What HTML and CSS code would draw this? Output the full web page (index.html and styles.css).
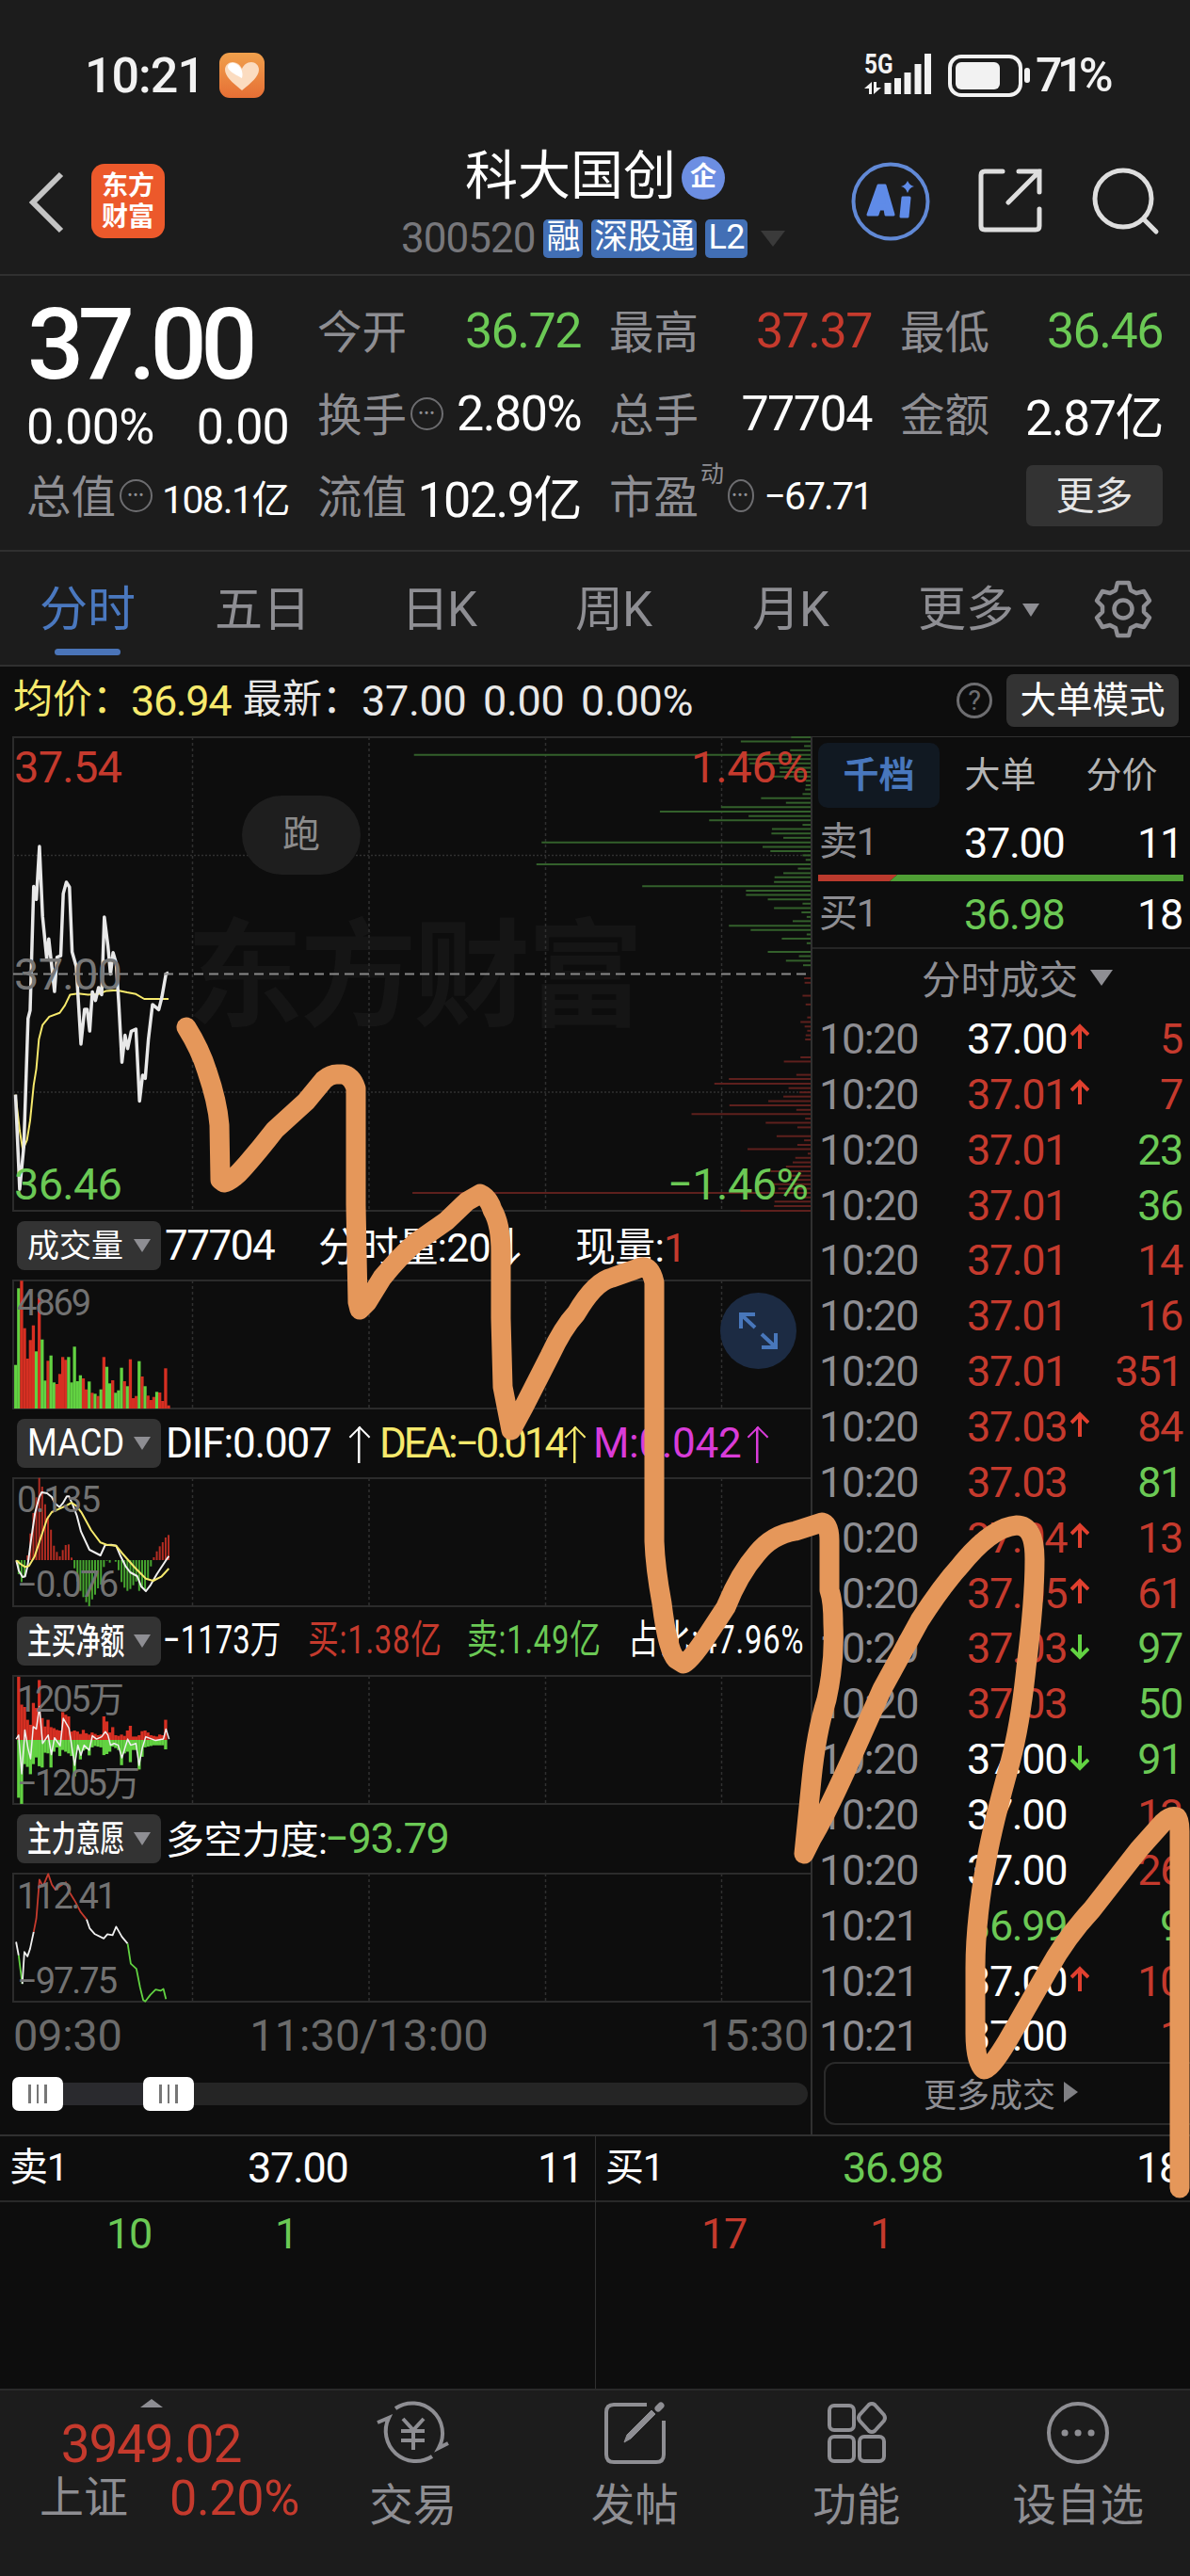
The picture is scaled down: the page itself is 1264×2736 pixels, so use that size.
FILE: index.html
```html
<!DOCTYPE html>
<html lang="zh-CN">
<head>
    <meta charset="utf-8">
    <title>科大国创 300520</title>
    <link rel="stylesheet" href="styles.css">
</head>
<body>
<div class="app">
    <div class="status">
        <span class="clock">10:21</span>
        <svg class="heart" width="48" height="48" viewBox="0 0 48 48">
            <defs><linearGradient id="hg" x1="0" y1="0" x2="0" y2="1"><stop offset="0" stop-color="#f0a04c"/><stop offset="1" stop-color="#e66f35"/></linearGradient></defs>
            <rect width="48" height="48" rx="11" fill="url(#hg)"/>
            <path d="M24 40C14 32 6 25 6 18c0-5 4-8 8-8 5 0 8 3 10 7 2-4 5-7 10-7 4 0 8 3 8 8 0 7-8 14-18 22z" fill="#fbdcc0"/>
            <path d="M24 27C14 22 8 18 9 14c1-3 4-4 7-3 6 2 10 9 8 16z" fill="#fff"/>
        </svg>
        <span class="space"></span>
        <svg class="signal" width="72" height="64" viewBox="0 -9 72 64">
            <text class="net" transform="translate(0 22) scale(.84 1)">5G</text>
            <path d="M25 44V32M35.500 44V27M46 44V21M57 44V12M67.500 44V1" stroke="#f2f2f2" stroke-width="7"/>
            <path d="M0 38l8-7v13h-3v-6zM10 31h3v6h5l-8 7z" fill="#f2f2f2"/>
        </svg>
        <svg class="battery" width="88" height="46" viewBox="0 0 88 46">
            <rect x="2" y="3" width="75" height="41" rx="12" fill="none" stroke="#f2f2f2" stroke-width="4"/>
            <rect x="8" y="9" width="47" height="29" rx="6" fill="#f2f2f2"/>
            <path d="M84 18v10" stroke="#f2f2f2" stroke-width="6" stroke-linecap="round"/>
        </svg>
        <span class="clock pct">71%</span>
    </div>

    <div class="head">
        <svg class="back" width="42" height="70" viewBox="0 0 42 70"><path d="M36 5L6 35l30 30" fill="none" stroke="#c4c4c4" stroke-width="6"/></svg>
        <div class="logo"><span>东方</span><span>财富</span></div>
        <div class="name">
            <div class="title">科大国创<span class="qi">企</span></div>
            <div class="code">300520<span class="tag">融</span><span class="tag">深股通</span><span class="tag">L2</span><i class="tri dark"></i></div>
        </div>
        <svg class="hicon" width="84" height="84" viewBox="0 0 84 84">
            <circle cx="42" cy="42" r="39.500" fill="none" stroke="#6189d6" stroke-width="4"/>
            <path d="M18 56L29 25h7l9 31h-8l-1-6h-6l-2 6zM31 43h4l-1-8z" fill="#5f8be8" stroke="#5f8be8" stroke-width="3" stroke-linejoin="round"/>
            <path d="M55 38h7l-2 20h-7z" fill="#5f8be8" stroke="#5f8be8" stroke-width="3" stroke-linejoin="round"/>
            <path d="M60 20q2 5 7 6-5 1-7 7-2-6-7-7 5-1 7-6z" fill="#5f8be8"/>
        </svg>
        <svg class="hicon share" width="68" height="68" viewBox="0 0 68 68" fill="none" stroke="#dedede" stroke-width="5" stroke-linecap="round">
            <path d="M26 3H7q-4 0-4 4v54q0 4 4 4h54q4 0 4-4V43M43 3h22v22M65 3L32 36"/>
        </svg>
        <svg class="hicon find" width="72" height="72" viewBox="0 0 72 72" fill="none" stroke="#dedede" stroke-width="5" stroke-linecap="round">
            <circle cx="33" cy="33" r="30"/><path d="M55 55l13 13"/>
        </svg>
    </div>

    <div class="quote">
        <div class="price">
            <b>37.00</b>
            <div class="pair"><span>0.00%</span><span>0.00</span></div>
        </div>
        <div class="cell"><label>今开</label><span class="green">36.72</span></div>
        <div class="cell"><label>最高</label><span class="red">37.37</span></div>
        <div class="cell"><label>最低</label><span class="green">36.46</span></div>
        <div class="cell"><label>换手</label><i class="dots">•••</i><span>2.80%</span></div>
        <div class="cell"><label>总手</label><span>77704</span></div>
        <div class="cell"><label>金额</label><span>2.87亿</span></div>
        <div class="cell small"><label>总值</label><i class="dots">•••</i><span>108.1亿</span></div>
        <div class="cell"><label>流值</label><span>102.9亿</span></div>
        <div class="cell small pe"><label>市盈</label><sup>动</sup><i class="dots">•••</i><span>−67.71</span></div>
        <div class="cell"><button class="more">更多</button></div>
    </div>

    <div class="tabs">
        <span class="on">分时</span><span>五日</span><span>日K</span><span>周K</span><span>月K</span><span>更多<i class="tri"></i></span>
        <svg class="gear" width="62" height="62" viewBox="0 0 62 62" fill="none" stroke="#8e8e93" stroke-width="4.500" stroke-linejoin="round">
            <path d="M25 3h12l2 8 6 3 8-2 6 10-6 6v6l6 6-6 10-8-2-6 3-2 8H25l-2-8-6-3-8 2-6-10 6-6v-6l-6-6 6-10 8 2 6-3z"/>
            <circle cx="31" cy="31" r="9.500"/>
        </svg>
    </div>

    <div class="avg">
        <span class="yellow a1">均价：</span><span class="yellow a2">36.94</span><span class="a3">最新：</span><span class="a4">37.00</span><span class="a5">0.00</span><span class="a6">0.00%</span>
        <i class="help">?</i><button class="big">大单模式</button>
    </div>

    <div class="main">
        <div class="left">
            <svg class="chart" id="price" width="864" height="505" viewBox="0 782 864 505">
                <text class="water" x="198" y="1080" textLength="486">东方财富</text>
                <g class="plot"></g>
                <path d="M14 1034.500H861" stroke="#8a8a8a" stroke-width="2" stroke-dasharray="10 6"/>
                <rect x="257" y="845" width="126" height="84" rx="42" fill="#1e1e1e"/>
                <text class="run" x="320" y="900" text-anchor="middle">跑</text>
                <text class="r" x="15" y="831" textLength="115">37.54</text>
                <text class="g" x="15" y="1274" textLength="115">36.46</text>
                <text class="n" x="15" y="1051" textLength="115">37.00</text>
                <text class="r" x="734" y="831" textLength="125">1.46%</text>
                <text class="g" x="709" y="1274" textLength="150">−1.46%</text>
            </svg>

            <div class="bar">
                <button><span>成交量</span><i class="tri"></i></button>
                <span class="v1">77704</span><span class="v2">分时量:20↓</span><span class="v3">现量:<em class="red">1</em></span>
            </div>
            <svg class="chart" id="volume" width="864" height="138" viewBox="0 1359 864 138">
                <g class="plot"></g>
                <text class="s" x="18" y="1397" textLength="79">4869</text>
                <circle cx="805.500" cy="1413.500" r="40.500" fill="#1c2b43"/>
                <path d="M787 1411v-15h15M788 1397l14 13M824 1416v15h-15M823 1430l-14-13" fill="none" stroke="#4877bb" stroke-width="4"/>
            </svg>

            <div class="bar">
                <button><span class="latin">MACD</span><i class="tri"></i></button>
                <span class="m1">DIF:0.007</span><i class="up"></i><span class="m2 yellow">DEA:−0.014</span><i class="up yellow"></i><span class="m3 purple">M:0.042</span><i class="up purple"></i>
            </div>
            <svg class="chart" id="macd" width="864" height="138" viewBox="0 1569 864 138">
                <g class="plot"></g>
                <text class="s" x="18" y="1606" textLength="89">0.135</text>
                <text class="s" x="18" y="1696" textLength="108">−0.076</text>
            </svg>

            <div class="bar">
                <button class="tight"><span class="thin">主买净额</span><i class="tri"></i></button>
                <svg class="net-row" width="688" height="64" viewBox="172 -5 688 64">
                    <text transform="translate(173 40) scale(.78 1)" textLength="161">−1173万</text>
                    <text class="r" transform="translate(327 40) scale(.78 1)" textLength="182">买:1.38亿</text>
                    <text class="g" transform="translate(496 40) scale(.78 1)" textLength="182">卖:1.49亿</text>
                    <text transform="translate(667 40) scale(.78 1)" textLength="239">占比:47.96%</text>
                </svg>
            </div>
            <svg class="chart" id="netbuy" width="864" height="138" viewBox="0 1779 864 138">
                <g class="plot"></g>
                <text class="s" x="18" y="1818" textLength="114">1205万</text>
                <text class="s" x="18" y="1907" textLength="131">−1205万</text>
            </svg>

            <div class="bar">
                <button><span class="thin">主力意愿</span><i class="tri"></i></button>
                <span class="w1">多空力度:</span><span class="green w2">−93.79</span>
            </div>
            <svg class="chart" id="will" width="864" height="138" viewBox="0 1989 864 138">
                <g class="plot"></g>
                <text class="s" x="18" y="2027" textLength="106">112.41</text>
                <text class="s" x="18" y="2117" textLength="107">−97.75</text>
            </svg>

            <div class="axis"><span>09:30</span><span class="mid">11:30/13:00</span><span>15:30</span></div>
            <div class="slider"><i></i><b></b><i></i></div>
        </div>

        <div class="right">
            <div class="rtabs"><span class="on">千档</span><span>大单</span><span>分价</span></div>
            <div class="lv"><span>卖1</span><span>37.00</span><span>11</span></div>
            <svg class="ratio" width="388" height="7" viewBox="0 0 388 7"><path d="M0 0h84l-8 7H0z" fill="#bb3a2d"/><path d="M84 0h304v7H76z" fill="#4f9f35"/></svg>
            <div class="lv buy"><span>买1</span><span class="green">36.98</span><span>18</span></div>
            <div class="deals">分时成交<i class="tri"></i></div>
            <div id="ticks"></div>
            <div class="all">更多成交<i></i></div>
        </div>
    </div>

    <div class="queue">
        <div class="side">
            <div class="qh"><span>卖1</span><span>37.00</span><span>11</span></div>
            <div class="qb green"><span>10</span><span>1</span></div>
        </div>
        <div class="side">
            <div class="qh"><span>买1</span><span class="green">36.98</span><span>18</span></div>
            <div class="qb red"><span>17</span><span>1</span></div>
        </div>
    </div>

    <div class="nav">
        <div class="index"><i></i><b>3949.02</b><div><span>上证</span><em>0.20%</em></div></div>
        <div class="item">
            <svg width="78" height="70" viewBox="0 0 78 70" fill="none" stroke="#8e8e93" stroke-width="4">
                <path d="M20 9A32 32 0 0 1 66 51L76 46M59 60A32 32 0 0 1 13 19L1 24"/>
                <path d="M28 20l11 12 11-12M39 31v22M26 33h25M26 43h25"/>
            </svg>交易
        </div>
        <div class="item">
            <svg width="70" height="70" viewBox="0 0 70 70" fill="none" stroke="#8e8e93" stroke-width="4">
                <path d="M48 5H13Q5 5 5 13v45q0 8 8 8h45q8 0 8-8V22"/>
                <path d="M24 45l3-8 26-26 4 4-26 26z" fill="#8e8e93" stroke-width="1"/>
                <path d="M60 9l3-3" stroke-width="7" stroke-linecap="round"/>
            </svg>发帖
        </div>
        <div class="item">
            <svg width="70" height="70" viewBox="0 0 70 70" fill="none" stroke="#8e8e93" stroke-width="4">
                <rect x="6" y="6" width="26" height="26" rx="5"/><rect x="6" y="39" width="26" height="26" rx="5"/><rect x="38" y="39" width="26" height="26" rx="5"/><path d="M48 5q3-2 6 0l10 11q2 3 0 6L54 33q-3 2-6 0L38 22q-2-3 0-6z"/>
            </svg>功能
        </div>
        <div class="item">
            <svg width="70" height="70" viewBox="0 0 70 70" fill="none" stroke="#8e8e93" stroke-width="4">
                <circle cx="35" cy="35" r="31"/><path d="M21 35h.1M35 35h.1M49 35h.1" stroke-width="7" stroke-linecap="round"/>
            </svg>设自选
        </div>
    </div>

    <!-- hand-drawn forecast over the whole page -->
    <svg class="draw" width="1264" height="2736" viewBox="0 0 1264 2736">
        <path d="M198 1091Q213 1115 220 1138Q231 1170 233 1195L234 1253L238 1256Q246 1255 259 1240Q275 1222 292 1200L325 1170L344 1147Q351 1141 358 1141H364Q374 1143 378 1156V1280L380 1383L382 1391L390 1383L406 1357Q424 1335 441 1320L474 1297L496 1276L510 1268Q519 1272 523 1285Q532 1300 532 1330V1400L534 1473L543 1519L557 1493L584 1440Q598 1410 612 1395Q632 1361 650 1357L681 1346Q691 1344 695 1362V1637Q696 1665 703 1703Q709 1753 718 1762L726 1767Q733 1765 752 1736L771 1707Q785 1672 804 1650Q820 1630 845 1626L873 1617Q881 1619 881 1636V1689Q885 1700 885 1725Q887 1764 878 1805Q867 1840 862 1890L854 1969L862 1953Q875 1932 900 1877L937 1794L977 1721Q1000 1685 1020 1663Q1053 1622 1080 1620Q1099 1620 1099 1656Q1099 1700 1090 1771Q1084 1830 1073 1872Q1054 1940 1048 1975Q1036 2040 1036 2090V2160Q1036 2190 1045 2198Q1052 2198 1070 2168L1113 2093Q1132 2058 1160 2028L1210 1964L1235 1936Q1243 1928 1250 1930Q1253 1933 1253 1945V2324"/>
    </svg>
</div>
<script src="chart.js"></script>
</body>
</html>
```
FILE: styles.css
```css
* { box-sizing: border-box; }
body {
    margin: 0;
    background: #0d0d0d;
    color: #fff;
    font-family: Roboto, "Noto Sans CJK SC", sans-serif;
    letter-spacing: -0.02em;
}
i, em { font-style: normal; }
button {
    font: inherit;
    letter-spacing: 0;
    border: 0;
    padding: 0;
    color: #fff;
    background: #333;
}
svg { display: block; flex: none; }
.app { position: relative; width: 1264px; height: 2736px; overflow: hidden; }
.green { color: #6bc955; }
.red { color: #c53a2d; }
.yellow { color: #f6e96c; }
.purple { color: #d93cd9; }
.tri {
    display: inline-block;
    border: 9px solid transparent;
    border-top: 14px solid #8e8e93;
    border-bottom: 0;
}

/* top */
.status {
    height: 154px;
    background: #1c1c1c;
    display: flex;
    align-items: center;
    padding: 6px 78px 0 90px;
}
.clock { font-size: 52px; letter-spacing: -1px; font-weight: 500; color: #f2f2f2; }
.heart { margin-left: 16px; }
.space { flex: 1; }
.signal { margin-top: -2px; }
.net { font-size: 29px; font-weight: 700; fill: #f2f2f2; letter-spacing: 0; }
.battery { margin-left: 17px; margin-right: 5px; }
.pct { font-size: 50px; letter-spacing: -5.500px; width: 86px; }
.head {
    height: 139px;
    background: #1c1c1c;
    border-bottom: 2px solid #303030;
    display: flex;
    align-items: flex-start;
    padding-left: 29px;
}
.back { margin-top: 26px; }
.logo {
    margin: 20px 0 0 26px;
    width: 78px;
    height: 79px;
    border-radius: 14px;
    background: #ec592b;
    display: flex;
    flex-direction: column;
    align-items: center;
    justify-content: center;
    font-size: 28px;
    line-height: 33px;
    font-weight: 700;
    letter-spacing: 0;
}
.name { width: 480px; margin-left: 207px; }
.title {
    height: 66px;
    padding: 0 0 1px 112px;
    display: flex;
    align-items: center;
    font-size: 56px;
    line-height: 56px;
    letter-spacing: 0;
}
.qi {
    width: 46px;
    height: 46px;
    margin: 4px 0 0 6px;
    border-radius: 50%;
    background: #6c8ee2;
    font-size: 28px;
    font-weight: 700;
    line-height: 44px;
    text-align: center;
}
.code {
    height: 66px;
    margin-left: 44px;
    display: flex;
    align-items: center;
    font-size: 44px;
    letter-spacing: -1px;
    color: #77777b;
}
.tag {
    height: 41px;
    margin-left: 9px;
    padding: 0 3px;
    border-radius: 5px;
    background: #426fb5;
    color: #fff;
    font-size: 36px;
    line-height: 39px;
    letter-spacing: -0.5px;
}
.code .dark { border: 13px solid transparent; border-top: 17px solid #3a3a3a; border-bottom: 0; margin-left: 14px; }
.hicon { margin: 18px 0 0 42px; }
.share { margin: 25px 0 0 51px; }
.find { margin: 24px 0 0 53px; }

/* quote */
.quote {
    height: 293px;
    background: #1c1c1c;
    border-bottom: 2px solid #303030;
    padding: 15px 29px 0 29px;
    display: grid;
    grid-template-columns: 278px 279px 278px 278px;
    grid-template-rows: repeat(3, 87.5px);
    column-gap: 31px;
}
.price { grid-row: span 2; }
.price b { display: block; font-size: 106px; line-height: 116px; font-weight: 500; letter-spacing: -6.500px; }
.pair { display: flex; justify-content: space-between; font-size: 52px; line-height: 60px; letter-spacing: -0.800px; margin-left: -1px; }
.cell { display: flex; align-items: center; font-size: 52px; letter-spacing: -1.5px; white-space: nowrap; }
.cell label { font-size: 47.5px; color: #8e8e93; letter-spacing: 0; margin: -4px 0 0 -1px; }
.cell span { margin-left: auto; }
.small span { font-size: 41px; }
.pe span { margin-left: 11px; letter-spacing: -2px; }
.cell sup { font-size: 25px; color: #8e8e93; align-self: flex-start; line-height: 42px; margin: 0 1px 0 2px; }
.dots {
    width: 35px;
    height: 35px;
    margin-left: 4px;
    border: 2.500px solid #6d6d70;
    border-radius: 50%;
    font-size: 15px;
    line-height: 30px;
    letter-spacing: 1px;
    text-align: center;
    color: #8e8e93;
}
.more {
    width: 145px;
    height: 65px;
    margin-left: auto;
    border-radius: 7px;
    font-size: 41px;
    line-height: 60px;
    color: #e6e6e6;
}

/* period tabs */
.tabs {
    height: 122px;
    background: #1c1c1c;
    border-bottom: 2px solid #303030;
    display: flex;
    font-size: 51px;
    line-height: 123px;
    letter-spacing: 0;
    color: #8e8e93;
    padding-left: 42px;
}
.tabs span { position: relative; width: 186px; white-space: nowrap; }
.tabs span:nth-child(2) { width: 198px; }
.tabs span:nth-child(3) { width: 185px; letter-spacing: -2px; }
.tabs span:nth-child(4) { width: 188px; letter-spacing: -1px; }
.tabs span:nth-child(5) { width: 176px; letter-spacing: -1px; }
.tabs span:nth-child(6) { width: 187px; }
.tabs .tri { margin: 0 0 10px 9px; }
.tabs .on { color: #4a78bf; }
.tabs .on::after {
    content: "";
    position: absolute;
    left: 16px;
    bottom: 10px;
    width: 70px;
    height: 7px;
    border-radius: 4px;
    background: #4a74b8;
}
.gear { margin-top: 30px; }

.avg {
    height: 74px;
    display: flex;
    align-items: center;
    padding: 0 12px 2px 14px;
    font-size: 45px;
    color: #e8e8e8;
    white-space: nowrap;
}
.avg .yellow { color: #f6e96c; }
.a1, .a3 { font-size: 42px; line-height: 52px; letter-spacing: 0; width: 125px; margin-top: -2px; }
.a2 { width: 119px; letter-spacing: -1.400px; }
.a4 { width: 129px; margin-left: 1px; }
.a5 { width: 104px; }
.help {
    width: 38px;
    height: 38px;
    margin-left: auto;
    border: 3px solid #6d6d70;
    border-radius: 50%;
    color: #6d6d70;
    font-size: 29px;
    line-height: 33px;
    text-align: center;
}
.big { width: 183px; height: 56px; margin-left: 15px; border-radius: 8px; font-size: 38.500px; line-height: 50px; }

/* charts */
.main { display: flex; height: 1485px; }
.left { width: 862px; flex: none; overflow: hidden; }
.chart text { font-size: 47px; letter-spacing: 0; }
.chart .s { font-size: 38px; fill: #727272; }
.chart .r, .net-row .r { fill: #c53a2d; }
.chart .g, .net-row .g { fill: #6bc955; }
.chart .n { fill: #777; }
.chart .run { font-size: 40px; fill: #8c8c8c; }
.chart .water { font-size: 124px; font-weight: 700; fill: #151515; }
.bar {
    height: 72px;
    padding-left: 18px;
    display: flex;
    align-items: center;
    font-size: 44px;
    white-space: nowrap;
}
.bar button {
    width: 153px;
    height: 52px;
    margin-right: 5px;
    padding: 0 11px;
    border-radius: 8px;
    display: flex;
    align-items: center;
    justify-content: space-between;
    font-size: 34px;
    line-height: 48px;
    flex: none;
}
.bar .tight { margin-right: 1px; }
.bar button .latin { font-size: 40px; width: 103px; transform: scaleX(0.91); transform-origin: left; }
.bar button .thin { font-size: 38px; width: 103px; transform: scaleX(0.68); transform-origin: left; font-weight: 500; }
.v1 { width: 163px; letter-spacing: -1.500px; margin-left: -1px; }
.v2 { width: 273px; }
.v2, .v3 { letter-spacing: -0.800px; font-size: 43px; margin-top: -4px; }
.m1 { width: 191px; letter-spacing: -1.200px; }
.m2 { width: 193px; letter-spacing: -3.200px; margin-left: 2px; }
.m3 { width: 160px; }
.up {
    width: 22px;
    height: 38px;
    margin: 4px 9px 0 3px;
    background: linear-gradient(currentColor, currentColor) center / 2.500px 100% no-repeat;
    position: relative;
}
.up::before {
    content: "";
    position: absolute;
    left: 4px;
    top: 2px;
    width: 14px;
    height: 14px;
    border: solid currentColor;
    border-width: 2.500px 0 0 2.500px;
    transform: rotate(45deg);
}
.net-row text { font-size: 42px; fill: #fff; letter-spacing: 0; }
.w1 { font-size: 41px; letter-spacing: -0.5px; width: 169px; margin-top: -5px; }
.w2 { font-size: 45px; letter-spacing: -1.200px; margin-top: -2px; }
.axis {
    display: flex;
    justify-content: space-between;
    height: 72px;
    padding: 0 3px 0 14px;
    font-size: 47px;
    line-height: 70px;
    color: #6b6b6b;
    letter-spacing: -0.3px;
}
.axis .mid { margin-right: 89px; letter-spacing: 0; }
.slider {
    display: flex;
    align-items: center;
    width: 845px;
    height: 24px;
    margin: 13px 0 0 13px;
    background: #252525;
    border-radius: 12px;
}
.slider i {
    width: 54px;
    height: 36px;
    border-radius: 7px;
    background: linear-gradient(90deg, transparent 17px, #777 17px 20px, transparent 20px 26px, #777 26px 28px, transparent 28px 34px, #777 34px 37px, transparent 37px) 0 8px / 54px 20px no-repeat #fff;
}
.slider b { width: 85px; height: 24px; background: #2a2a2e; }

/* order book */
.right { width: 403px; flex: none; margin-left: -1px; border-left: 2px solid #303030; border-top: 1px solid #303030; overflow: hidden; }
.rtabs {
    display: flex;
    height: 69px;
    margin: 6px 0 0 6px;
    font-size: 38px;
    line-height: 68px;
    letter-spacing: 0;
    color: #b4b4b4;
}
.rtabs span { width: 129px; text-align: center; }
.rtabs .on { color: #4877bd; background: #111922; border-radius: 10px; font-weight: 700; }
.lv {
    height: 71px;
    display: grid;
    grid-template-columns: 154px 140px 1fr;
    padding: 0 8px 0 7px;
    font-size: 45px;
    line-height: 76px;
    letter-spacing: -1.300px;
}
.lv span:first-child { font-size: 41px; color: #8e8e93; line-height: 72px; }
.lv span:last-child { text-align: right; }
.buy { line-height: 72px; }
.buy span:first-child { line-height: 68px; }
.ratio { margin-left: 6px; }
.deals {
    height: 68px;
    border-top: 2px solid #252525;
    display: flex;
    align-items: center;
    padding: 0 0 6px 116px;
    margin-top: -1px;
    font-size: 41.500px;
    letter-spacing: 0;
    color: #8e8e93;
}
.deals .tri { border: 12px solid transparent; border-top: 17px solid #8e8e93; border-bottom: 0; margin-left: 13px; }
#ticks { padding-top: 1px; }
.tick {
    height: 58.87px;
    display: grid;
    grid-template-columns: 157px 110px 22px 1fr;
    align-items: center;
    padding: 0 8px 2px 7px;
    font-size: 45px;
    letter-spacing: -1.400px;
}
.tick span:first-child { color: #8e8e93; }
.tick span:last-child { text-align: right; }
.tick svg { margin-top: -4px; }
.all {
    width: 420px;
    height: 67px;
    margin: -3px 0 0 12px;
    padding: 0 0 3px 104px;
    border: 2px solid #2a2a2a;
    border-radius: 12px;
    display: flex;
    align-items: center;
    font-size: 35px;
    letter-spacing: 0;
    color: #8e8e93;
}
.all i { border: 11px solid transparent; border-left: 15px solid #808084; border-right: 0; margin-left: 9px; }

/* bottom */
.queue { display: flex; height: 270px; border-top: 2px solid #303030; }
.side { width: 632px; }
.side + .side { border-left: 1px solid #303030; }
.qh {
    height: 70px;
    border-bottom: 2px solid #282828;
    display: grid;
    grid-template-columns: 253px 1fr 120px;
    padding: 0 13px 0 10px;
    font-size: 45px;
    line-height: 68px;
    letter-spacing: -1.300px;
}
.side + .side .qh { grid-template-columns: 252px 1fr 120px; padding-right: 9px; }
.qh span:first-child { font-size: 41px; line-height: 66px; }
.qh span:last-child { text-align: right; }
.qb { display: flex; font-size: 45px; line-height: 68px; padding-left: 113px; letter-spacing: -1.300px; }
.side + .side .qb { padding-left: 112px; }
.qb span { width: 179px; }
.nav { display: flex; height: 200px; background: #1c1c1c; border-top: 2px solid #2a2a2a; color: #8e8e93; }
.index { width: 321px; text-align: center; color: #c53a2d; }
.index i { display: block; width: 0; margin: 9px auto 0; border: 12px solid transparent; border-bottom: 9px solid #8e8e93; border-top: 0; }
.index b { display: block; font-size: 55px; line-height: 64px; margin-top: 7px; font-weight: 400; letter-spacing: -1.200px; }
.index div { display: flex; padding-left: 42px; font-size: 52px; line-height: 52px; letter-spacing: -0.3px; }
.index div span { font-size: 47px; color: #8e8e93; width: 138px; text-align: left; letter-spacing: 0; line-height: 50px; }
.item {
    width: 235.500px;
    display: flex;
    flex-direction: column;
    align-items: center;
    padding-top: 10px;
    font-size: 46.500px;
    line-height: 84px;
    letter-spacing: 0;
}
.draw { position: absolute; left: 0; top: 0; fill: none; stroke: #e5975a; stroke-width: 21; stroke-linecap: round; stroke-linejoin: round; }
```
FILE: chart.js
```js
const RED = '#d62f22', GREEN = '#62d242', WHITE = '#f0f0f0', YELLOW = '#f6e96c';
const PITCH = 3.122, X0 = 16.7;

function put(id, html) {
  document.querySelector('#' + id + ' .plot').innerHTML += html;
}

function grid(id, top, bottom, rows) {
  let s = '';
  [204.5, 392, 579.5, 766.5].forEach(x => s += `<path d="M${x} ${top}V${bottom}" stroke="#303030" stroke-width="1.5" stroke-dasharray="3 3"/>`);
  (rows || []).forEach(y => s += `<path d="M14 ${y}H861" stroke="#303030" stroke-width="1.5" stroke-dasharray="2 2"/>`);
  s += `<path d="M861 ${top}H14V${bottom}H861" fill="none" stroke="#2b2b2b" stroke-width="2"/>`;
  put(id, s);
}

// points are stored as measured, then scaled to the page: x / kx, oy + y / ky
function line(id, pts, color, width, kx, ky, oy) {
  const p = pts.split(' ').map(a => a.split(',')).map(a => (a[0] / kx).toFixed(1) + ',' + (oy + a[1] / ky).toFixed(1)).join(' ');
  put(id, `<polyline points="${p}" fill="none" stroke="${color}" stroke-width="${width}" stroke-linejoin="round"/>`);
}

function bar(id, i, base, h, color, w) {
  const x = X0 + i * PITCH - w / 2;
  put(id, `<rect x="${x.toFixed(2)}" y="${(h > 0 ? base - h : base).toFixed(1)}" width="${w}" height="${Math.abs(h).toFixed(1)}" fill="${color}"/>`);
}

grid('price', 783, 1286, [908.5, 1160]);
grid('volume', 1360, 1496);
grid('macd', 1570, 1706);
grid('netbuy', 1780, 1916);
grid('will', 1990, 2126);

// depth: [y, left edge]
const asks = '38,1525 51,1428 65,1550 78,1523 92,798 105,1442 118,1445 132,1503 145,1503 159,1487 172,1553 186,1553 199,1552 213,1547 226,1467 240,1515 253,1390 267,1272 281,1443 294,1367 308,1547 321,1488 335,1487 348,1510 362,1044 376,1470 389,1485 402,1547 416,1553 430,1034 443,1538 457,1510 470,1493 484,1492 497,1238 511,1438 524,1438 538,1480 551,1547 565,1492 578,1545 592,1555 605,1528 619,1405 632,1447 646,1555 659,1507 673,1555 700,1480 713,1540 727,1515 741,1548';
const bids = '781,1550 795,1551 835,1547 862,1553 902,1556 916,1543 930,1551 943,1556 957,1553 970,1552 1025,1543 1038,1511 1079,1535 1092,1405 1106,1377 1120,1520 1133,1541 1146,1510 1160,1481 1173,1406 1187,1535 1200,1333 1214,1552 1227,1476 1241,1537 1268,1497 1281,1550 1295,1537 1308,1441 1322,1557 1335,1533 1349,1528 1362,1515 1376,1486 1390,1520 1403,1525 1416,1487 1430,1500 1443,795 1457,1540 1470,1493 1484,1492 1498,1427';
[[asks, '#33602b'], [bids, '#5e201d']].forEach(([list, color]) => {
  list.split(' ').map(a => a.split(',')).forEach(a => {
    put('price', `<path d="M${a[1] / 1.8148} ${770 + a[0] / 2.9037}H861" stroke="${color}" stroke-width="2"/>`);
  });
});
line('price', '30,1140 38,1250 44,1310 52,1280 58,1220 65,1110 70,1060 75,970 82,925 95,900 115,888 125,865 135,832 150,828 170,832 190,830 205,820 225,818 245,825 262,830 278,845 325,845', YELLOW, 2, 1.8148, 2.9037, 770);
line('price', '30,1140 38,1432 46,1300 54,905 58,880 65,498 70,538 76,375 82,590 90,720 94,660 105,822 110,716 117,712 122,520 128,485 134,500 139,700 147,745 151,850 156,984 163,877 168,877 173,944 178,823 184,850 190,810 196,832 201,592 208,680 213,768 218,702 224,735 229,860 235,1040 241,957 246,998 253,945 262,938 269,1160 275,1080 280,1090 286,970 294,862 306,878 312,840 320,768 325,764', '#e8e8e8', 3.5, 1.8148, 2.9037, 770);

const vol = 'g139 g383 r407 r256 r159 r218 r265 g182 r352 g220 g89 r152 g169 g83 r78 r110 r164 r155 g164 g83 g197 g87 g106 r96 r61 g86 r50 g47 r40 g61 r164 g133 g80 r90 g50 g58 g130 r87 g71 r157 r33 r40 g151 r102 g71 r41 r27 r37 g53 r51 r24 r128 r10';
vol.split(' ').forEach((v, i) => bar('volume', i, 1496, v.slice(1) / 3, v[0] === 'r' ? RED : GREEN, 3.3));

const macd = [0, -45, -70, -55, 15, 85, 150, 200, 262, 234, 178, 140, 97, 46, 26, 12, 32, 48, 50, 8, -26, -68, -98, -118, -134, -147, -125, -110, -90, -78, -22, -2, -8, 0, -5, -32, -70, -88, -98, -92, -80, -68, -98, -90, -98, -60, -20, 9, 28, 44, 57, 72, 80];
macd.forEach((v, i) => bar('macd', i, 1657, v / 3, v > 0 ? '#b42c22' : '#46a52f', 2));
line('macd', '52,952 60,985 72,1005 80,1003 88,970 100,880 112,800 125,750 133,735 150,738 165,750 175,770 190,782 200,770 213,748 220,748 232,775 245,810 258,860 285,918 320,936 335,903 355,902 370,905 385,940 400,970 415,990 437,1002 450,1035 465,1050 480,1030 500,995 520,965 538,938', WHITE, 2, 3, 3, 1340);
line('macd', '52,952 65,963 80,973 92,970 110,940 130,880 150,820 165,798 190,787 210,778 228,768 243,778 260,800 290,855 320,895 340,902 370,905 390,930 430,975 465,1010 488,1017 515,1003 538,978', YELLOW, 2, 3, 3, 1340);

const buy = [0, 188, 105, 98, 60, 45, 110, 95, 178, 65, 40, 60, 38, 35, 30, 28, 83, 75, 70, 25, 28, 25, 18, 30, 20, 16, 22, 18, 14, 16, 70, 55, 22, 38, 14, 12, 16, 12, 28, 42, 10, 10, 14, 26, 28, 22, 14, 12, 10, 16, 14, 60];
const sell = [0, 172, 190, 72, 80, 102, 72, 52, 78, 82, 38, 40, 82, 35, 22, 48, 30, 35, 40, 48, 108, 30, 58, 32, 28, 46, 22, 18, 20, 22, 45, 42, 35, 20, 24, 30, 75, 40, 35, 66, 30, 30, 88, 50, 22, 20, 18, 16, 16, 16, 16, 28];
buy.forEach((v, i) => bar('netbuy', i, 1848, v / 2.8, RED, 3.3));
sell.forEach((v, i) => bar('netbuy', i, 1848, -v / 2.8, GREEN, 3.3));
line('netbuy', '31,412 36,400 42,515 48,385 54,440 59,470 64,375 70,382 76,315 82,425 93,400 99,458 105,408 116,432 122,350 133,380 144,490 150,430 156,460 162,430 172,445 178,402 186,412 196,405 203,390 208,400 213,430 220,425 228,430 235,468 246,412 252,430 262,425 268,490 274,440 281,405 300,416 315,412 320,382 326,412', WHITE, 1.5, 1.8148, 2.8, 1700);

[
  ['31,1015 36,1055', WHITE],
  ['36,1055 43,1140', GREEN],
  ['43,1140 47,1045 53,1058 58,1035 65,985', WHITE],
  ['65,985 70,945 76,830 83,850 93,813 100,845 107,860 115,850 127,838 135,870 145,895 155,925 167,948', '#c53a2d'],
  ['167,948 173,975 183,992 200,1005 207,992 217,995 224,970 235,1000 246,1020', WHITE],
  ['246,1020 252,1080 263,1095 270,1150 276,1188 280,1192 290,1172 300,1157 310,1160 315,1155 320,1185', GREEN]
].forEach(p => line('will', p[0], p[1], 1.8, 1.8148, 2.8, 1700));

// time, price, price colour, arrow, volume, volume colour
const ticks = [
  ['10:20', '37.00', '', 'u', 5, 'red'],
  ['10:20', '37.01', 'red', 'u', 7, 'red'],
  ['10:20', '37.01', 'red', '', 23, 'green'],
  ['10:20', '37.01', 'red', '', 36, 'green'],
  ['10:20', '37.01', 'red', '', 14, 'red'],
  ['10:20', '37.01', 'red', '', 16, 'red'],
  ['10:20', '37.01', 'red', '', 351, 'red'],
  ['10:20', '37.03', 'red', 'u', 84, 'red'],
  ['10:20', '37.03', 'red', '', 81, 'green'],
  ['10:20', '37.04', 'red', 'u', 13, 'red'],
  ['10:20', '37.05', 'red', 'u', 61, 'red'],
  ['10:20', '37.03', 'red', 'd', 97, 'green'],
  ['10:20', '37.03', 'red', '', 50, 'green'],
  ['10:20', '37.00', '', 'd', 91, 'green'],
  ['10:20', '37.00', '', '', 13, 'red'],
  ['10:20', '37.00', '', '', 26, 'red'],
  ['10:21', '36.99', 'green', 'd', 9, 'green'],
  ['10:21', '37.00', '', 'u', 10, 'red'],
  ['10:21', '37.00', '', '', 1, 'red']
];
const arrows = {
  '': '<i></i>',
  u: '<svg width="20" height="28" fill="none" stroke="#e0402f" stroke-width="4"><path d="M10 27V3M1 12l9-9 9 9"/></svg>',
  d: '<svg width="20" height="28" fill="none" stroke="#62d242" stroke-width="4"><path d="M10 1v24M1 16l9 9 9-9"/></svg>'
};
document.getElementById('ticks').innerHTML = ticks.map(t =>
  `<div class="tick"><span>${t[0]}</span><span class="${t[2]}">${t[1]}</span>${arrows[t[3]]}<span class="${t[5]}">${t[4]}</span></div>`).join('');
```
